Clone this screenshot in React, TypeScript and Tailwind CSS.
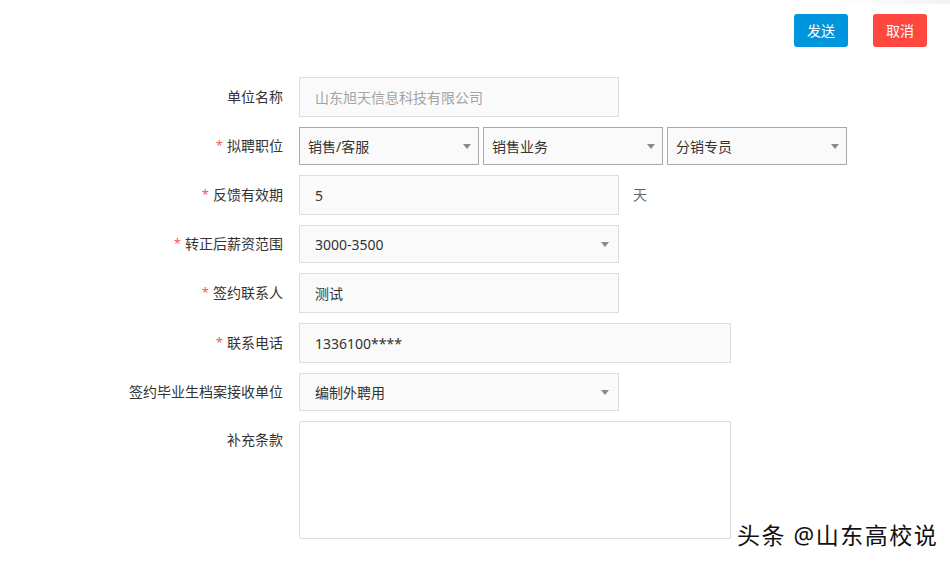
import React from "react"

const FONT = { fontFamily: '"Noto Sans", "Noto Sans CJK SC", sans-serif' }

function Label({ text, required, top }: { text: string; required?: boolean; top?: boolean }) {
  return (
    <div className={`w-[283px] shrink-0 flex justify-end text-[14px] text-[#333] ${top ? "items-start pt-[8px]" : "items-center -mt-[2px]"}`}>
      {required && <span className="text-[#f25a5a] text-[13px] mr-[4px] leading-none">*</span>}
      <span>{text}</span>
    </div>
  )
}

function Arrow() {
  return (
    <svg width="8" height="5" viewBox="0 0 8 5" className="shrink-0">
      <path d="M0 0 L8 0 L4 5 Z" fill="#8a8a8a" />
    </svg>
  )
}

function Select({ value, width, dark }: { value: string; width: string; dark?: boolean }) {
  return (
    <div className={`${width} h-[38px] flex items-center justify-between bg-[#fafafa] border ${dark ? "border-[#a9a9a9] pl-[8px] pr-[7px]" : "border-[#dedede] pl-[15px] pr-[9px]"} text-[14px] text-[#333]`}>
      <span>{value}</span>
      <Arrow />
    </div>
  )
}

function Input({ value, width, muted }: { value: string; width: string; muted?: boolean }) {
  return (
    <div className={`${width} h-[40px] flex items-center bg-[#fafafa] border border-[#dedede] pl-[15px] text-[14px] ${muted ? "text-[#a3a3a3]" : "text-[#333]"}`}>
      {value}
    </div>
  )
}

export default function App() {
  return (
    <div className="relative w-[950px] h-[563px] bg-white overflow-hidden" style={FONT}>
      <div className="absolute top-0 right-0 w-[120px] h-[4px] bg-gradient-to-l from-[#f2f2f2] to-transparent" />
      <div className="flex justify-end gap-[25px] pt-[14px] pr-[23px]">
        <button className="w-[54px] h-[33px] rounded-[3px] bg-[#0096de] text-white text-[14px]">发送</button>
        <button className="w-[54px] h-[33px] rounded-[3px] bg-[#ff4740] text-white text-[14px]">取消</button>
      </div>

      <div className="flex flex-col gap-[10px] mt-[30px]">
        <div className="flex gap-4">
          <Label text="单位名称" />
          <Input value="山东旭天信息科技有限公司" width="w-[320px]" muted />
        </div>
        <div className="flex gap-4">
          <Label text="拟聘职位" required />
          <div className="flex gap-[4px]">
            <Select value="销售/客服" width="w-[180px]" dark />
            <Select value="销售业务" width="w-[180px]" dark />
            <Select value="分销专员" width="w-[180px]" dark />
          </div>
        </div>
        <div className="flex gap-4">
          <Label text="反馈有效期" required />
          <Input value="5" width="w-[320px]" />
          <span className="self-center -ml-[2px] -mt-[2px] text-[14px] text-[#666]">天</span>
        </div>
        <div className="flex gap-4">
          <Label text="转正后薪资范围" required />
          <Select value="3000-3500" width="w-[320px]" />
        </div>
        <div className="flex gap-4">
          <Label text="签约联系人" required />
          <Input value="测试" width="w-[320px]" />
        </div>
        <div className="flex gap-4">
          <Label text="联系电话" required />
          <Input value="1336100****" width="w-[432px]" />
        </div>
        <div className="flex gap-4">
          <Label text="签约毕业生档案接收单位" />
          <Select value="编制外聘用" width="w-[320px]" />
        </div>
        <div className="flex gap-4">
          <Label text="补充条款" top />
          <div className="w-[432px] h-[118px] border border-[#dcdcdc] rounded-[2px] bg-white" />
        </div>
      </div>

      <div
        className="absolute left-[737px] top-[518px] text-[23px] text-[#111] tracking-[1.5px]"
        style={{ textShadow: "1px 1px 0 #fff, -1px -1px 0 #fff, 1px -1px 0 #fff, -1px 1px 0 #fff" }}
      >
        头条 @山东高校说
      </div>
    </div>
  )
}
